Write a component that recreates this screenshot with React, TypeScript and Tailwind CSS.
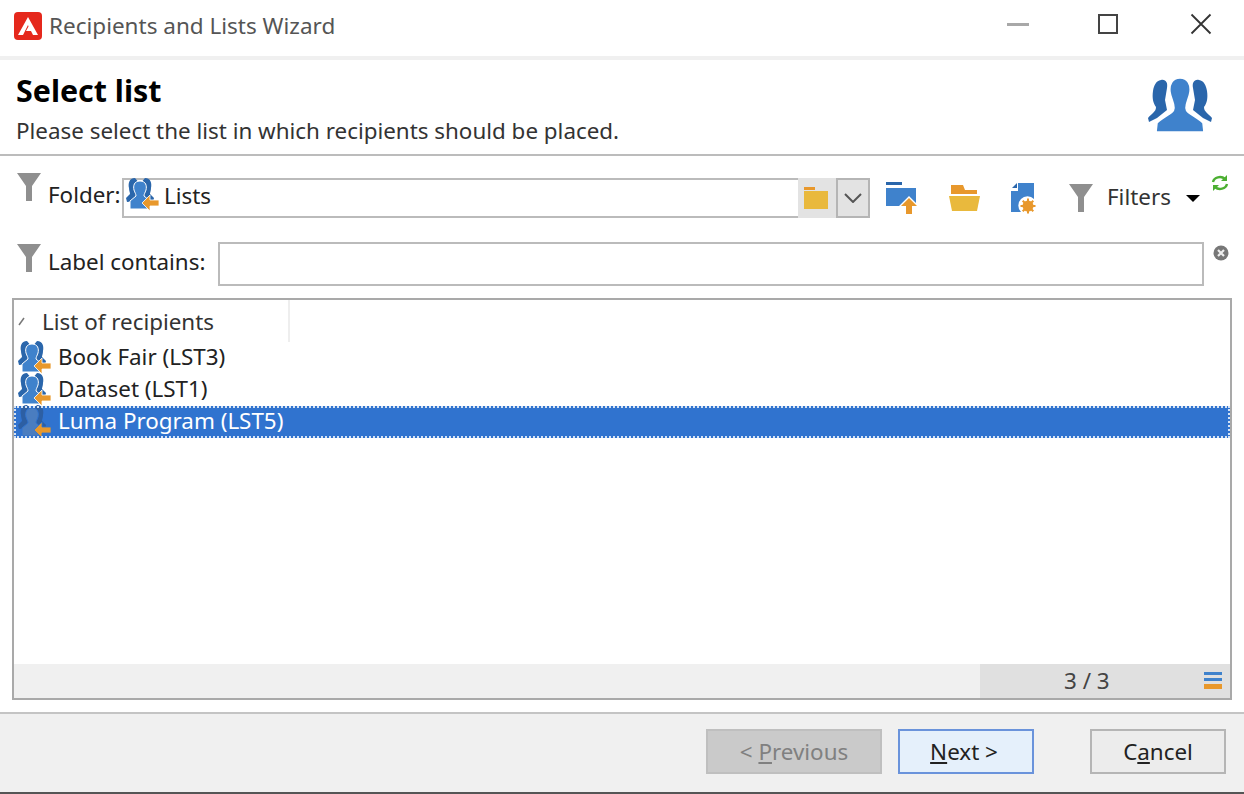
import React from "react";

const FONT = "[font-family:'Noto_Sans','Open_Sans',sans-serif]";

function AdobeLogo() {
  return (
    <svg width="30" height="30" viewBox="0 0 30 30" className="shrink-0">
      <rect x="1" y="1" width="28" height="28" rx="4" fill="#e5281c" />
      <path d="M15 6 L25 24 L20 24 L18 20 L13 20 L15.5 15.5 L15 14 L10 24 L5 24 Z" fill="#fff" />
    </svg>
  );
}

function Funnel({ className = "" }: { className?: string }) {
  return (
    <svg width="26" height="30" viewBox="0 0 26 30" className={className}>
      <path d="M1 1 H25 L16 14 V29 H10 V14 Z" fill="#8f8f8f" />
    </svg>
  );
}

// little blue people with an orange arrow, used in the folder field and rows
function ListIcon({ dim = false, className = "" }: { dim?: boolean; className?: string }) {
  const back = dim ? "#2d5fa3" : "#2a66ab";
  const front = dim ? "#4a7dc0" : "#3f82cc";
  const gap = dim ? "#3073cf" : "#fff";
  return (
    <svg width="34" height="34" viewBox="0 0 34 34" className={`shrink-0 ${className}`}>
      <path d="M9 0 C3 0 2 6 3 10 C3 13 4 14 4 16 L0 20 L1 24 L10 23 L14 6 Z" fill={back} />
      <path d="M19 0 C25 0 26 6 25 10 C25 13 24 14 24 16 L28 20 L27 24 L18 23 L14 6 Z" fill={back} />
      <path
        d="M14 3 C8 3 7 8 8 12 C9 15 10 16 10 18 L4 23 L4 31 L23 31 L24 23 L18 18 C18 16 19 15 20 12 C21 8 20 3 14 3 Z"
        fill={front}
        stroke={gap}
        strokeWidth="1"
      />
      <path d="M16 25 L24 17 L24 22 L33 22 L33 28 L24 28 L24 33 Z" fill="#e8982c" stroke={gap} strokeWidth="0.8" />
    </svg>
  );
}

function GroupIcon() {
  return (
    <svg width="66" height="56" viewBox="0 0 66 56" className="shrink-0">
      <path d="M14 2 C19 1 21 5 20 10 L18 22 L20 32 L10 40 L2 44 L1 40 C5 35 9 34 9 29 C6 25 5 20 6 13 C7 7 9 3 14 2 Z" fill="#2a66ab" />
      <path d="M52 2 C47 1 45 5 46 10 L48 22 L46 32 L56 40 L64 44 L65 40 C61 35 57 34 57 29 C60 25 61 20 60 13 C59 7 57 3 52 2 Z" fill="#2a66ab" />
      <path
        d="M33 0 C25 0 22 7 23 14 C24 21 27 24 27 30 C27 36 16 38 10 45 L9 54 H57 L56 45 C50 38 39 36 39 30 C39 24 42 21 43 14 C44 7 41 0 33 0 Z"
        fill="#3f82cc"
        stroke="#fff"
        strokeWidth="1.6"
      />
    </svg>
  );
}

function FolderSmall() {
  return (
    <svg width="26" height="24" viewBox="0 0 26 24">
      <path d="M1 1 H12 V4 H1 Z" fill="#e8982c" />
      <path d="M1 5 H25 V23 H1 Z" fill="#e9b93d" />
    </svg>
  );
}

function FolderUpIcon() {
  return (
    <svg width="32" height="34" viewBox="0 0 32 34">
      <rect x="1" y="1" width="16" height="3" fill="#2a66ab" />
      <path d="M1 7 H31 V22 L24 15 L14 25 H1 Z" fill="#3f82cc" />
      <path d="M24 17 L32 25 H27 V33 H21 V25 H16 Z" fill="#e8982c" />
    </svg>
  );
}

function FolderOpenIcon() {
  return (
    <svg width="32" height="28" viewBox="0 0 32 28">
      <path d="M3 1 H15 L17 6 H29 V10 H3 Z" fill="#e8982c" />
      <path d="M1 12 H32 L29 27 H4 Z" fill="#e9b93d" />
    </svg>
  );
}

function FolderGearIcon() {
  return (
    <svg width="28" height="32" viewBox="0 0 28 32">
      <path d="M8 1 H24 V17 A9 9 0 0 0 11 30 H1 V9 H8 Z" fill="#3f82cc" />
      <path d="M2 6 L7 1 V6 Z" fill="#2a66ab" />
      <circle cx="18" cy="24" r="5.5" fill="#e8982c" />
      <path d="M18 16.5 V31.5 M10.5 24 H25.5 M12.7 18.7 L23.3 29.3 M23.3 18.7 L12.7 29.3" stroke="#e8982c" strokeWidth="2" />
    </svg>
  );
}

function RefreshIcon() {
  return (
    <svg width="18" height="18" viewBox="0 0 18 18" fill="none" stroke="#4caf32" strokeWidth="2.4">
      <path d="M2 8 A7 6 0 0 1 14 5" />
      <path d="M16 10 A7 6 0 0 1 4 13" />
      <path d="M16 1 V7 H10 Z" fill="#4caf32" stroke="none" />
      <path d="M2 17 V11 H8 Z" fill="#4caf32" stroke="none" />
    </svg>
  );
}

function ClearIcon() {
  return (
    <svg width="16" height="16" viewBox="0 0 16 16">
      <circle cx="8" cy="8" r="7.5" fill="#777" />
      <path d="M5 5 L11 11 M11 5 L5 11" stroke="#eee" strokeWidth="2.2" />
    </svg>
  );
}

function WinButtons() {
  return (
    <div className="flex items-center">
      <div className="w-[22px] h-[3px] bg-[#a8a8a8]" />
      <div className="ml-[69px] size-[20px] border-2 border-[#444]" />
      <svg width="22" height="22" viewBox="0 0 22 22" className="ml-[72px]">
        <path d="M1.5 1.5 L20.5 20.5 M20.5 1.5 L1.5 20.5" stroke="#333" strokeWidth="1.8" />
      </svg>
    </div>
  );
}

const rows = [
  { label: "Book Fair (LST3)", selected: false },
  { label: "Dataset (LST1)", selected: false },
  { label: "Luma Program (LST5)", selected: true },
];

export default function App() {
  return (
    <div className={`w-[1244px] h-[794px] flex flex-col overflow-hidden bg-white text-[22.4px] text-[#222] ${FONT}`}>
      {/* title bar */}
      <div className="h-[56px] flex items-center pl-[13px] pr-[32px] pb-[4px]">
        <AdobeLogo />
        <span className="ml-[6px] text-[#555] text-[22.5px]">Recipients and Lists Wizard</span>
        <div className="ml-auto -mt-[4px]">
          <WinButtons />
        </div>
      </div>
      <div className="h-[4px] bg-[#f0f0f0]" />

      {/* header */}
      <div className="h-[96px] flex justify-between border-b-2 border-[#bcbcbc] pl-[16px] pr-[31px]">
        <div className="flex flex-col">
          <h1 className="mt-[11px] font-bold text-[30.4px] leading-[40px] text-black">Select list</h1>
          <p className="mt-[4px] leading-[32px] text-[#333]">Please select the list in which recipients should be placed.</p>
        </div>
        <div className="mt-[18px]">
          <GroupIcon />
        </div>
      </div>

      {/* folder row */}
      <div className="mt-[22px] h-[40px] flex pl-[16px]">
        <Funnel className="-mt-[6px]" />
        <span className="ml-[6px] w-[74px] leading-[34px]">Folder:</span>
        <div className="w-[748px] flex">
          <div className="flex-1 h-[40px] flex items-start border-2 border-r-0 border-[#bbb] pl-[2px]">
            <ListIcon className="-mt-[2px]" />
            <span className="ml-[4px] leading-[32px]">Lists</span>
          </div>
          <div className="w-[38px] h-[40px] flex items-center pl-[5px] bg-[#e3e3e3]">
            <FolderSmall />
          </div>
          <div className="w-[34px] h-[40px] flex items-center justify-center bg-[#e3e3e3] border-2 border-[#b5b5b5]">
            <svg width="18" height="10" viewBox="0 0 18 10" fill="none" stroke="#555" strokeWidth="2">
              <path d="M1 1 L9 9 L17 1" />
            </svg>
          </div>
        </div>
        <div className="ml-[15px] flex items-center h-[40px]">
          <FolderUpIcon />
          <div className="ml-[31px]"><FolderOpenIcon /></div>
          <div className="ml-[30px]"><FolderGearIcon /></div>
          <div className="ml-[30px]"><Funnel /></div>
          <span className="ml-[13px] -mt-[3px] text-[#333] w-[62px]">Filters</span>
          <div className="ml-[17px] mt-[1px] border-x-[7px] border-x-transparent border-t-[7px] border-t-black" />
          <div className="ml-[11px] -mt-[30px]"><RefreshIcon /></div>
        </div>
      </div>

      {/* label row */}
      <div className="mt-[24px] h-[44px] flex pl-[16px]">
        <Funnel className="mt-[1px]" />
        <span className="ml-[6px] w-[170px] leading-[40px]">Label contains:</span>
        <div className="w-[986px] h-[44px] border-2 border-[#bbb]" />
        <div className="ml-[9px] mt-[3px]"><ClearIcon /></div>
      </div>

      {/* list */}
      <div className="mt-[12px] mx-[12px] h-[402px] flex flex-col border-2 border-[#a9a9a9]">
        <div className="h-[42px] flex">
          <div className="w-[276px] flex items-center border-r-2 border-[#eee] pl-[4px]">
            <svg width="8" height="10" viewBox="0 0 8 10"><path d="M1 9 L6 2" stroke="#777" strokeWidth="1.5" /></svg>
            <span className="ml-[16px] mt-[2px] text-[#333]">List of recipients</span>
          </div>
        </div>
        <div className="flex-1">
          {rows.map((row) => (
            <div
              key={row.label}
              className={`h-[32px] flex items-center pl-[4px] ${
                row.selected ? "bg-[#3073cf] text-white outline-2 -outline-offset-2 outline-dotted outline-[#d5e3f5]" : ""
              }`}
            >
              <ListIcon dim={row.selected} />
              <span className="ml-[6px] -mt-[2px]">{row.label}</span>
            </div>
          ))}
        </div>
        <div className="h-[34px] flex bg-[#f0f0f0]">
          <div className="ml-auto w-[250px] flex items-center bg-[#e0e0e0] relative">
            <span className="ml-[84px] text-[#444]">3 / 3</span>
            <div className="absolute right-[8px] top-[8px] w-[18px] flex flex-col gap-[3px]">
              <div className="h-[3px] bg-[#3f82cc]" />
              <div className="h-[3px] bg-[#3f82cc]" />
              <div className="h-[5px] bg-[#e8982c]" />
            </div>
          </div>
        </div>
      </div>

      {/* footer */}
      <div className="mt-[12px] flex-1 flex items-start justify-end bg-[#f0f0f0] border-t-2 border-[#c4c4c4] border-b-2 border-b-[#555] pr-[18px] pt-[15px]">
        <button className="w-[176px] h-[45px] bg-[#cacaca] border-2 border-[#bfbfbf] text-[#808080]">
          &lt; <span className="underline">P</span>revious
        </button>
        <button className="ml-[16px] w-[136px] h-[45px] bg-[#e5f0fb] border-2 border-[#6a93db] text-[#222] pr-[4px]">
          <span className="underline">N</span>ext &gt;
        </button>
        <button className="ml-[56px] w-[136px] h-[45px] bg-[#ececec] border-2 border-[#b5b5b5] text-[#222]">
          C<span className="underline">a</span>ncel
        </button>
      </div>
    </div>
  );
}
